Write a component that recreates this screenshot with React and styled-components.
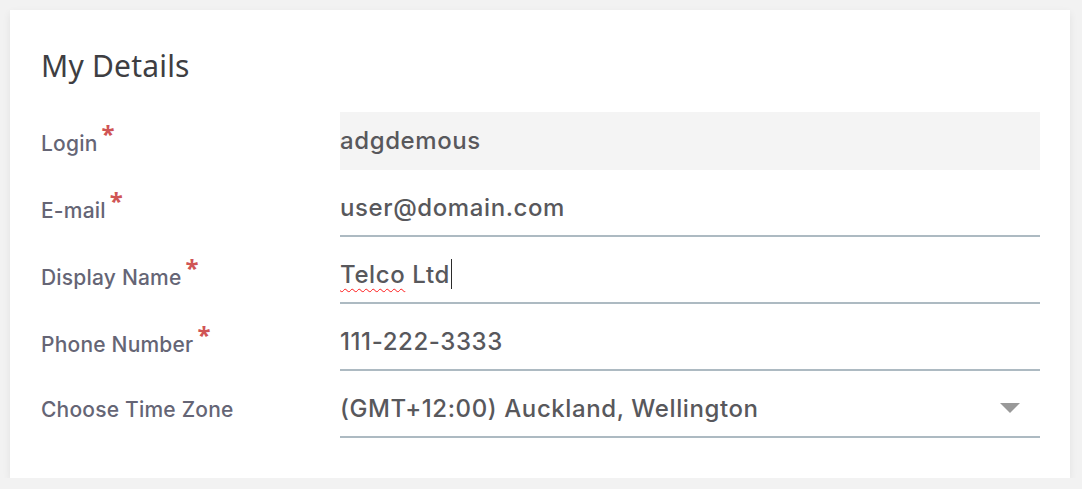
import React from 'react'
import styled, {createGlobalStyle} from 'styled-components'

const GlobalStyle = createGlobalStyle`
html, body {
    margin: 0;
    background: #f2f2f2;
}
body {
    padding: 10px 12px 0 10px;
}
`

const fields = [
    {label: 'Login', value: 'adgdemous', required: true, readOnly: true},
    {label: 'E-mail', value: 'user@domain.com', required: true},
    {label: 'Display Name', value: 'Telco Ltd', required: true, focused: true},
    {label: 'Phone Number', value: '111-222-3333', required: true},
    {label: 'Choose Time Zone', value: '(GMT+12:00) Auckland, Wellington', select: true},
]

export default function App(){
    return(
        <>
            <GlobalStyle />
            <Card>
                <Title>My Details</Title>
                {fields.map(f => (
                    <Row key={f.label}>
                        <Label>
                            {f.label}
                            {f.required && <Star>*</Star>}
                        </Label>
                        <Field $readOnly={f.readOnly}>
                            {f.focused ? (
                                <Value>
                                    <Misspelled>Telco</Misspelled> Ltd<Caret />
                                </Value>
                            ) : (
                                <Value>{f.value}</Value>
                            )}
                            {f.select && <Arrow />}
                        </Field>
                    </Row>
                ))}
            </Card>
        </>
    )
}

const Card = styled.div`
background: #fff;
width: 1060px;
height: 468px;
box-sizing: border-box;
padding: 0 30px 0 31px;
box-shadow: 0 3px 8px rgba(0,0,0,0.07);
`

const Title = styled.h2`
margin: 0;
padding-top: 36px;
height: 57px;
font-family: 'Noto Sans', sans-serif;
font-weight: 400;
font-size: 30px;
line-height: 40px;
color: #3e3e42;
letter-spacing: 0.2px;
`

const Row = styled.div`
display: grid;
grid-template-columns: 299px 1fr;
align-items: center;
padding-top: 9px;
`

const Label = styled.div`
font-family: Inter, 'Noto Sans', sans-serif;
font-size: 21px;
font-weight: 500;
letter-spacing: 0.2px;
color: #656575;
`

const Star = styled.span`
font-family: 'Noto Sans', sans-serif;
font-weight: 700;
font-size: 24px;
color: #d05555;
margin-left: 4px;
position: relative;
top: -8px;
`

const Field = styled.div`
height: 58px;
box-sizing: border-box;
display: flex;
align-items: center;
justify-content: space-between;
padding-right: 20px;
background: ${p => p.$readOnly ? '#f4f4f4' : 'transparent'};
border-bottom: 2px solid ${p => p.$readOnly ? 'transparent' : '#adbac2'};
`

const Value = styled.span`
font-family: Inter, Roboto, sans-serif;
font-size: 24px;
font-weight: 500;
letter-spacing: 0.6px;
color: #58585c;
display: flex;
align-items: center;
white-space: pre;
`

const Misspelled = styled.span`
text-decoration: underline wavy #ff1a1a;
text-decoration-thickness: 1px;
text-underline-offset: 5px;
`

const Caret = styled.span`
display: inline-block;
width: 1px;
height: 30px;
background: #2b2b2b;
margin-left: 1px;
`

const Arrow = styled.span`
width: 0;
height: 0;
border-left: 10px solid transparent;
border-right: 10px solid transparent;
border-top: 10px solid #999;
`
